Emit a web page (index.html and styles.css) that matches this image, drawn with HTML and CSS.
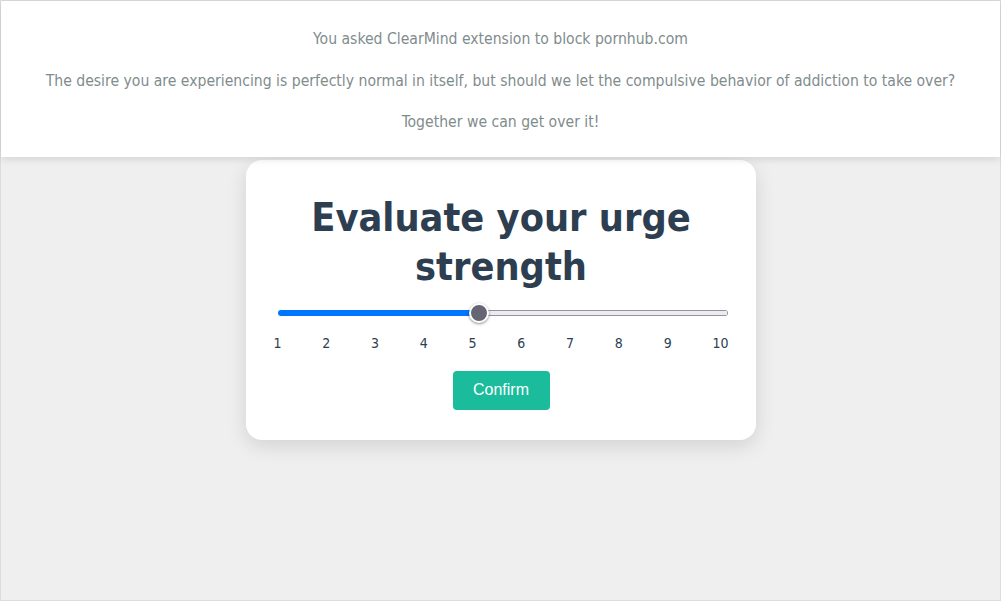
FILE: index.html
```html
<!DOCTYPE html>
<html lang="en">
<head>
<meta charset="utf-8">
<title>ClearMind</title>
<link rel="stylesheet" href="styles.css">
</head>
<body>
<div class="frame">
  <header class="notice">
    <p>You asked ClearMind extension to block pornhub.com</p>
    <p>The desire you are experiencing is perfectly normal in itself, but should we let the compulsive behavior of addiction to take over?</p>
    <p>Together we can get over it!</p>
  </header>
  <main class="stage">
    <section class="card">
      <h1 class="title">Evaluate your urge strength</h1>
      <input class="urge" type="range" min="1" max="10" value="5" style="--fill: 44.7%">
      <div class="scale">
        <span>1</span><span>2</span><span>3</span><span>4</span><span>5</span>
        <span>6</span><span>7</span><span>8</span><span>9</span><span>10</span>
      </div>
      <button class="confirm" type="button">Confirm</button>
    </section>
  </main>
</div>
</body>
</html>
```

FILE: styles.css
```css
* { box-sizing: border-box; }

html, body {
  margin: 0;
  padding: 0;
  height: 100%;
}

body {
  font-family: "DejaVu Sans Condensed", "DejaVu Sans", sans-serif;
  background: #efefef;
}

.frame {
  height: 601px;
  border: 1px solid #dcdcdc;
  background: #efefef;
  display: flex;
  flex-direction: column;
}

.notice {
  background: #ffffff;
  padding: 29px 0 25.5px;
  display: flex;
  flex-direction: column;
  gap: 23.5px;
  text-align: center;
  box-shadow: 0 2px 8px rgba(0, 0, 0, 0.12);
  position: relative;
  z-index: 1;
}

.notice p {
  margin: 0;
  font-size: 15.6px;
  line-height: 18px;
  color: #7f8c8d;
}

.stage {
  display: flex;
  justify-content: center;
  padding-top: 3px;
}

.card {
  width: 510px;
  background: #ffffff;
  border-radius: 16px;
  box-shadow: 0 6px 20px rgba(0, 0, 0, 0.12);
  padding: 33px 27px 30px 28px;
  display: flex;
  flex-direction: column;
  align-items: center;
}

.title {
  margin: 0 0 12px;
  font-size: 39.3px;
  line-height: 49px;
  font-weight: bold;
  color: #2c3e50;
  text-align: center;
}

.urge {
  -webkit-appearance: none;
  appearance: none;
  width: 450px;
  margin: 0 0 0 4px;
  height: 20px;
  background: transparent;
  align-self: flex-start;
}

.urge::-webkit-slider-runnable-track {
  height: 6px;
  border-radius: 4px;
  background:
    linear-gradient(#0075ff, #0075ff) left / var(--fill) 100% no-repeat,
    linear-gradient(#ececf0, #ececf0) center / calc(100% - 2px) calc(100% - 2px) no-repeat,
    #94949f;
}

.urge::-webkit-slider-thumb {
  -webkit-appearance: none;
  appearance: none;
  width: 20px;
  height: 20px;
  margin-top: -7px;
  border-radius: 50%;
  background: #656573;
  border: 2px solid #ffffff;
  box-shadow: 0 1px 3px rgba(0, 0, 0, 0.45);
}

.scale {
  align-self: stretch;
  display: flex;
  justify-content: space-between;
  margin-top: 11px;
  font-size: 14px;
  line-height: 18px;
  color: #2c3e50;
}

.confirm {
  margin-top: 19px;
  width: 97px;
  height: 39px;
  border: 0;
  border-radius: 4px;
  background: #1abc9c;
  color: #ffffff;
  font-family: "Liberation Sans", Arial, sans-serif;
  font-size: 16px;
}
```
